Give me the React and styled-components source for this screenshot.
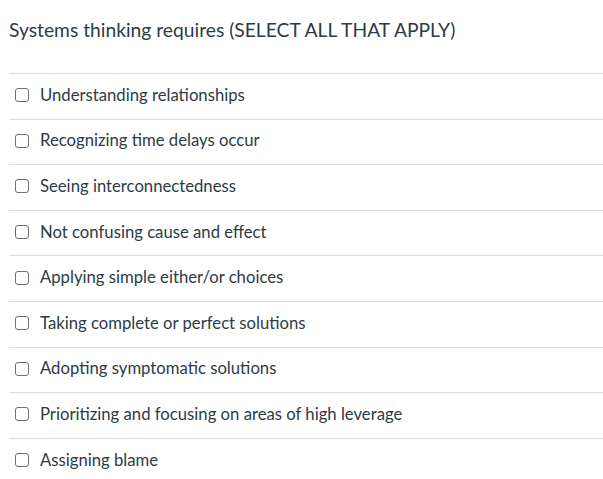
import React from 'react'
import styled, { createGlobalStyle } from 'styled-components'

const GlobalStyle = createGlobalStyle`
  body {
    margin: 0;
    background: #fff;
    font-family: Lato, "Open Sans", sans-serif;
    color: #2d3b45;
  }
`

const Container = styled.div`
  padding: 0 0 0 9px;
`

const Title = styled.h2`
  margin: 0;
  padding-top: 17px;
  height: 73px;
  box-sizing: border-box;
  font-size: 19.25px;
  line-height: 26px;
  font-weight: 400;
  color: #2d3b45;
`

const List = styled.div`
  display: flex;
  flex-direction: column;
`

const Row = styled.label`
  display: flex;
  align-items: center;
  gap: 11px;
  height: 45.6px;
  box-sizing: border-box;
  border-top: 1px solid #dcdcdc;
  padding: 0 0 3px 6px;
  font-size: 16.7px;
  font-weight: 400;
  color: #2d3b45;
`

const Box = styled.span`
  display: block;
  width: 14px;
  height: 14px;
  box-sizing: border-box;
  border: 1.5px solid #6e6e6e;
  border-radius: 3px;
  flex-shrink: 0;
  margin-top: 1px;
`

const options = [
  'Understanding relationships',
  'Recognizing time delays occur',
  'Seeing interconnectedness',
  'Not confusing cause and effect',
  'Applying simple either/or choices',
  'Taking complete or perfect solutions',
  'Adopting symptomatic solutions',
  'Prioritizing and focusing on areas of high leverage',
  'Assigning blame',
]

export default function App() {
  return (
    <Container>
      <GlobalStyle />
      <Title>Systems thinking requires (SELECT ALL THAT APPLY)</Title>
      <List>
        {options.map((o) => (
          <Row key={o}>
            <Box />
            <span>{o}</span>
          </Row>
        ))}
      </List>
    </Container>
  )
}
